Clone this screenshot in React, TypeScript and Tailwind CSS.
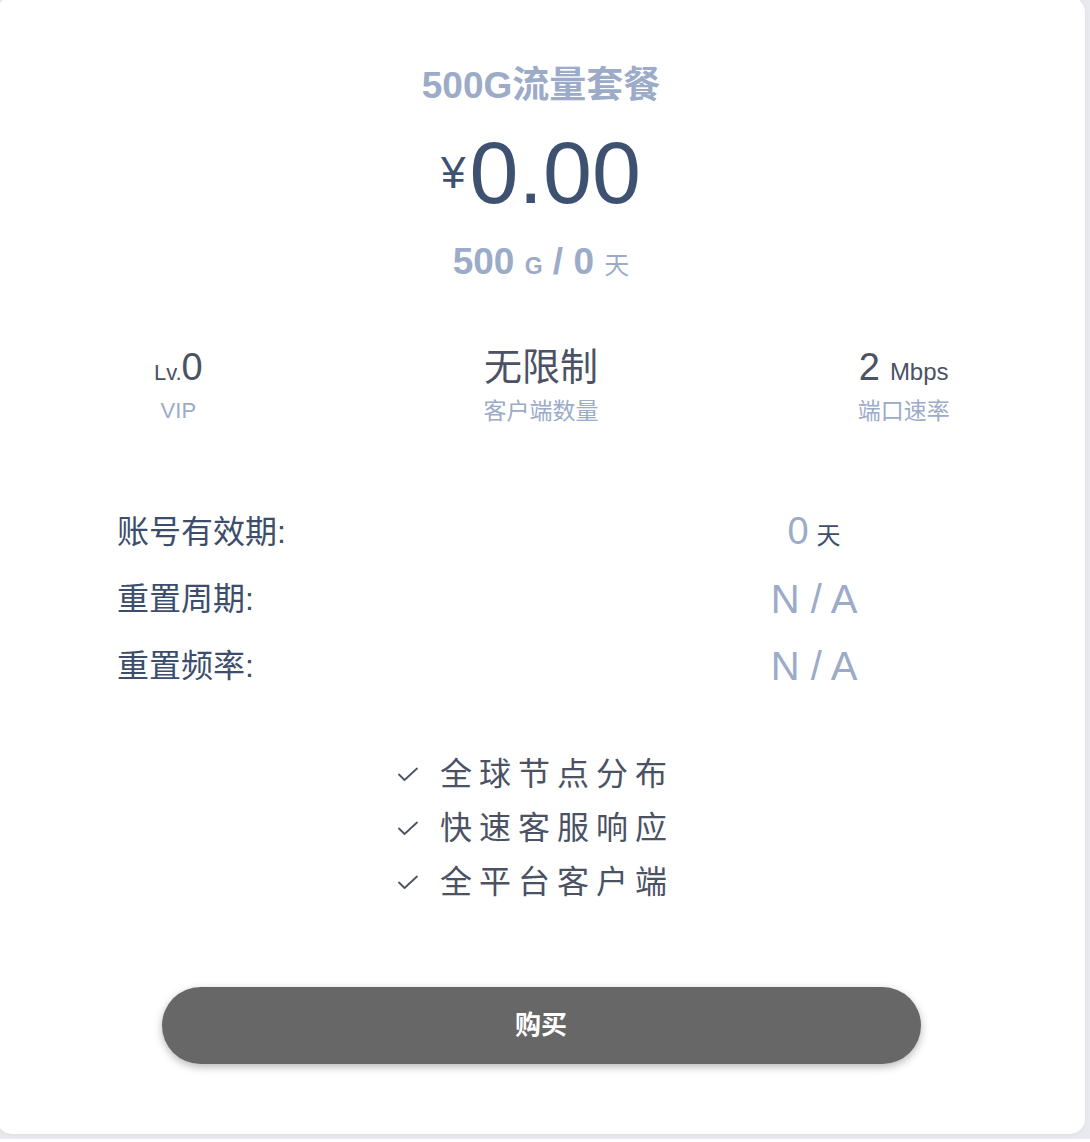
const features = ["全球节点分布", "快速客服响应", "全平台客户端"];

function Check() {
  return (
    <svg width="24" height="24" viewBox="0 0 24 24" fill="none" stroke="#4b5264" strokeWidth="1.8" strokeLinecap="round" strokeLinejoin="round">
      <polyline points="3 12.5 8.5 18 21 6.5" />
    </svg>
  );
}

export default function App() {
  return (
    <div className="min-h-screen bg-[#e9eaef] font-['Liberation_Sans','Noto_Sans_CJK_SC',sans-serif]">
      <div className="-ml-[3px] -mt-[3px] w-[1088px] h-[1137px] bg-white rounded-[15px] shadow-[0_1px_4px_rgba(0,0,0,0.06)] pt-[69px]">
        {/* 标题 */}
        <div className="h-[40px] leading-[40px] text-center text-[37px] font-bold text-[#9babc8]">
          500G流量套餐
        </div>

        {/* 价格 */}
        <div className="mt-[17px] h-[100px] flex items-center justify-center text-[#3e5171]">
          <span className="text-[44px] leading-none mr-[4px]">¥</span>
          <span className="text-[88px] leading-none">0.00</span>
        </div>

        <div className="mt-[17px] h-[44px] leading-[44px] text-center text-[#9babc8] font-bold">
          <span className="text-[37px]">500 </span>
          <span className="text-[23px]">G</span>
          <span className="text-[37px]"> / 0 </span>
          <span className="text-[25px] font-normal">天</span>
        </div>

        {/* 规格 */}
        <div className="mt-[61px] grid grid-cols-3 text-center">
          <div>
            <div className="h-[44px] leading-[44px] text-[#4b5264]">
              <span className="text-[22px]">Lv.</span>
              <span className="text-[38px]">0</span>
            </div>
            <div className="mt-[7px] h-[30px] leading-[30px] text-[22px] text-[#9babc8]">VIP</div>
          </div>
          <div>
            <div className="h-[44px] leading-[44px] text-[38px] text-[#4b5264]">无限制</div>
            <div className="mt-[7px] h-[30px] leading-[30px] text-[23px] text-[#9babc8]">客户端数量</div>
          </div>
          <div>
            <div className="h-[44px] leading-[44px] text-[#4b5264]">
              <span className="text-[38px]">2</span>
              <span className="text-[24px] ml-[10px]">Mbps</span>
            </div>
            <div className="mt-[7px] h-[30px] leading-[30px] text-[23px] text-[#9babc8]">端口速率</div>
          </div>
        </div>

        {/* 详情 */}
        <div className="mt-[72px] pl-[120px]">
          <div className="h-[67px] flex items-center">
            <div className="flex-1 text-[32px] text-[#3d4e6c]">账号有效期:</div>
            <div className="w-[200px] mr-[171px] text-center">
              <span className="text-[38px] text-[#9babc8]">0</span>
              <span className="text-[24px] text-[#3d4e6c] ml-[8px]">天</span>
            </div>
          </div>
          <div className="h-[67px] flex items-center">
            <div className="flex-1 text-[32px] text-[#3d4e6c]">重置周期:</div>
            <div className="w-[200px] mr-[171px] text-center text-[40px] text-[#9babc8]">N / A</div>
          </div>
          <div className="h-[67px] flex items-center">
            <div className="flex-1 text-[32px] text-[#3d4e6c]">重置频率:</div>
            <div className="w-[200px] mr-[171px] text-center text-[40px] text-[#9babc8]">N / A</div>
          </div>
        </div>

        {/* 特性 */}
        <div className="mt-[48px] flex flex-col items-center pr-[12px]">
          {features.map((f) => (
            <div key={f} className="h-[54px] flex items-center">
              <Check />
              <span className="ml-[20px] text-[32px] tracking-[7px] text-[#4b5264]">{f}</span>
            </div>
          ))}
        </div>

        <button className="block mt-[78px] mx-auto w-[759px] h-[77px] rounded-full bg-[#676767] text-white text-[26px] font-bold shadow-[0_3px_8px_rgba(0,0,0,0.28)]">
          购买
        </button>
      </div>
    </div>
  );
}
